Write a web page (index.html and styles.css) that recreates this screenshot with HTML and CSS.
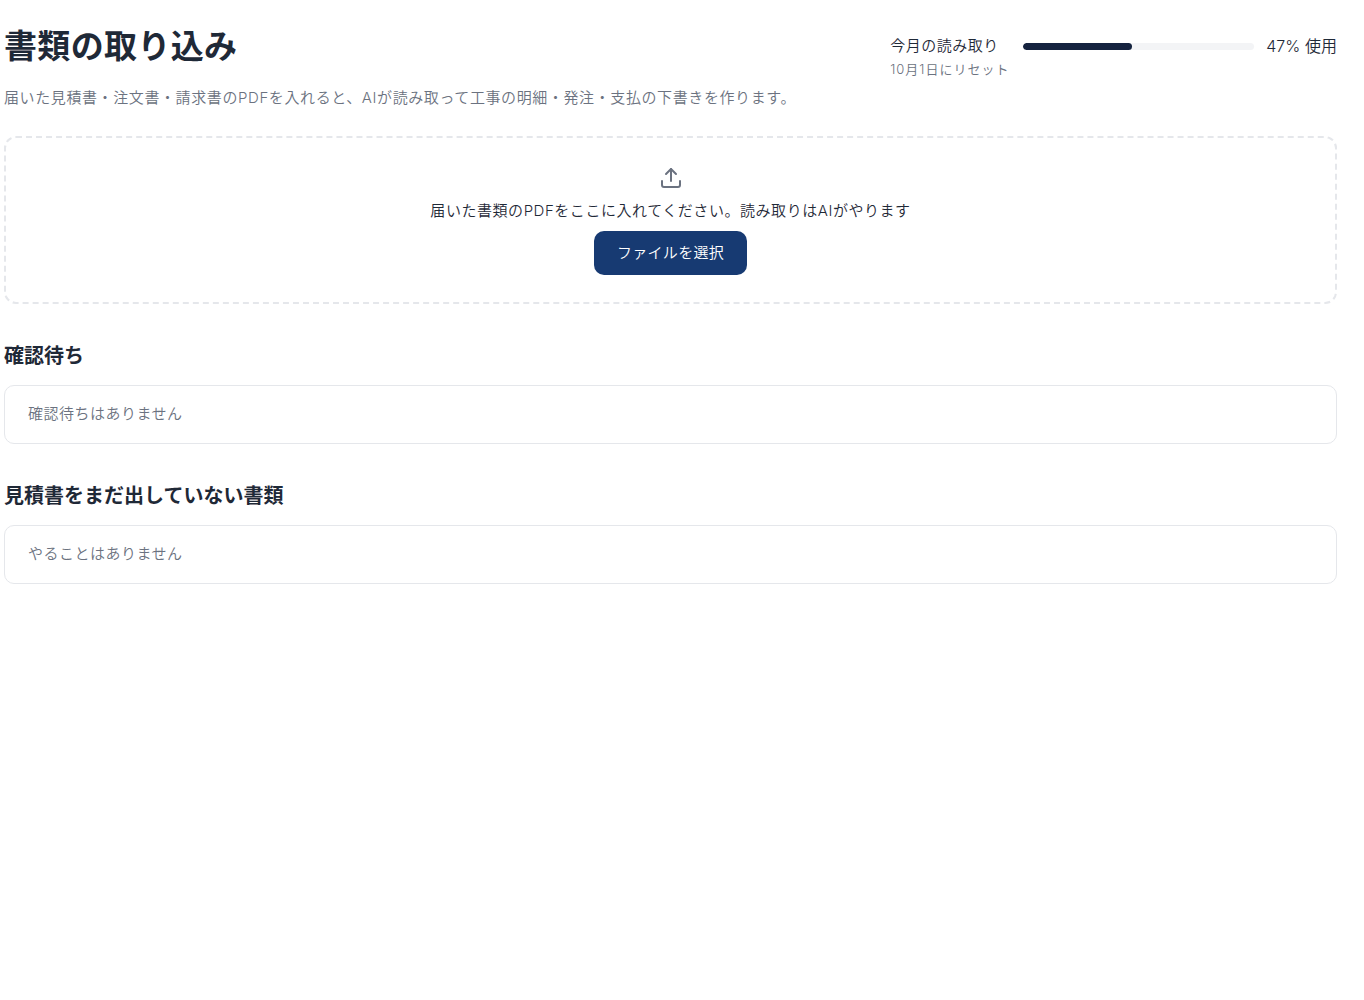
FILE: index.html
```html
<!doctype html>
<html lang="ja">
<head>
    <meta charset="UTF-8">
    <title>書類の取り込み</title>
    <link rel="stylesheet" href="styles.css">
</head>
<body>
<div class="page">
    <div class="page-header">
        <div class="header-text">
            <h1 class="page-title">書類の取り込み</h1>
            <p class="page-desc">届いた見積書・注文書・請求書のPDFを入れると、AIが読み取って工事の明細・発注・支払の下書きを作ります。</p>
        </div>
        <div class="usage">
            <div class="usage-labels">
                <div class="usage-name">今月の読み取り</div>
                <div class="usage-reset">10月1日にリセット</div>
            </div>
            <div class="usage-bar"><div class="usage-fill"></div></div>
            <div class="usage-percent">47% 使用</div>
        </div>
    </div>

    <div class="drop-zone">
        <svg class="upload-icon" width="24" height="24" viewBox="0 0 24 24" fill="none" stroke="currentColor" stroke-width="2" stroke-linecap="round" stroke-linejoin="round">
            <path d="M21 15v4a2 2 0 0 1-2 2H5a2 2 0 0 1-2-2v-4"/>
            <path d="M17 8l-5-5-5 5"/>
            <path d="M12 3v12"/>
        </svg>
        <p class="drop-text">届いた書類のPDFをここに入れてください。読み取りはAIがやります</p>
        <button class="select-btn" type="button">ファイルを選択</button>
    </div>

    <section class="section">
        <h2 class="section-title">確認待ち</h2>
        <div class="empty-card">確認待ちはありません</div>
    </section>

    <section class="section">
        <h2 class="section-title">見積書をまだ出していない書類</h2>
        <div class="empty-card">やることはありません</div>
    </section>
</div>
</body>
</html>
```

FILE: styles.css
```css
* {
    margin: 0;
    padding: 0;
    box-sizing: border-box;
}

body {
    background-color: #fff;
    color: #1f2937;
    font-family: "Inter", "Noto Sans CJK JP", sans-serif;
}

.page {
    padding: 24px 27px 0 4px;
}

.page-header {
    display: flex;
    justify-content: space-between;
    align-items: flex-start;
}

.page-title {
    font-size: 33px;
    font-weight: 700;
    line-height: 44px;
    letter-spacing: 0.35px;
    color: #1f2937;
}

.page-desc {
    margin-top: 20px;
    font-size: 15px;
    font-weight: 350;
    line-height: 20px;
    letter-spacing: 0.6px;
    color: #6b7280;
}

.usage {
    display: flex;
    align-items: flex-start;
    gap: 13px;
    margin-top: 12px;
}

.usage-labels {
    width: 120px;
}

.usage-name {
    font-size: 15px;
    font-weight: 350;
    line-height: 20px;
    letter-spacing: 0.5px;
    color: #1f2937;
}

.usage-reset {
    margin-top: 4px;
    font-size: 13px;
    font-weight: 350;
    line-height: 18px;
    letter-spacing: 1px;
    color: #6b7280;
}

.usage-bar {
    width: 231px;
    height: 7px;
    margin-top: 7px;
    border-radius: 4px;
    background-color: #f3f4f6;
    overflow: hidden;
}

.usage-fill {
    width: 47%;
    height: 100%;
    border-radius: 4px;
    background-color: #15233f;
}

.usage-percent {
    margin-left: -1px;
    font-size: 16px;
    font-weight: 350;
    line-height: 20px;
    letter-spacing: 0.05px;
    color: #1f2937;
}

.drop-zone {
    display: flex;
    flex-direction: column;
    align-items: center;
    height: 168px;
    margin-top: 28px;
    padding-top: 28px;
    border: 2px dashed #e5e7eb;
    border-radius: 12px;
}

.upload-icon {
    color: #6b7280;
}

.drop-text {
    margin-top: 10px;
    font-size: 15px;
    font-weight: 350;
    line-height: 22px;
    letter-spacing: 0.55px;
    color: #1f2937;
}

.select-btn {
    width: 153px;
    height: 44px;
    margin-top: 9px;
    padding-bottom: 3px;
    border: none;
    border-radius: 10px;
    background-color: #173a72;
    color: #fff;
    font-family: inherit;
    font-size: 15px;
    font-weight: 350;
    letter-spacing: 0.3px;
}

.section {
    margin-top: 38px;
}

.section-title {
    font-size: 20px;
    font-weight: 700;
    line-height: 28px;
    color: #1f2937;
}

.empty-card {
    margin-top: 15px;
    padding: 17px 23px 18px;
    border: 1px solid #e5e7eb;
    border-radius: 10px;
    font-size: 15px;
    font-weight: 350;
    line-height: 22px;
    letter-spacing: 0.5px;
    color: #6b7280;
}
```
